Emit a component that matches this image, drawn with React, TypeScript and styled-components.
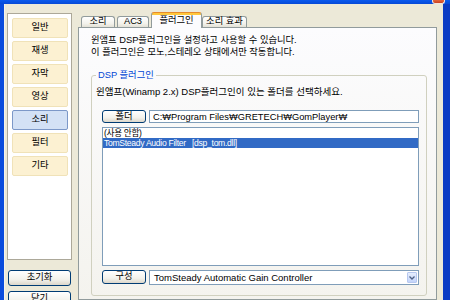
import React from "react";
import styled, { createGlobalStyle } from "styled-components";

const Global = createGlobalStyle`
  html, body { margin: 0; padding: 0; background: #ECE9D8; }
  * { box-sizing: border-box; }
`;

const UI_FONT = `"Liberation Sans", "Noto Sans CJK KR", sans-serif`;

const Window = styled.div`
  width: 450px;
  height: 300px;
  overflow: hidden;
  display: flex;
  flex-direction: column;
  font-family: ${UI_FONT};
  font-size: 9px;
  color: #000;
`;

const TitleBar = styled.div`
  flex: none;
  height: 4px;
  background: linear-gradient(#0A5AEE, #0649D6);
  display: flex;
  justify-content: flex-end;
  align-items: flex-end;
  padding-right: 5px;
`;

const CloseButton = styled.div`
  width: 13px;
  height: 4px;
  background: linear-gradient(#E4643D, #C9421F);
  border: 1px solid #F4E4DC;
  border-top: none;
  border-radius: 0 0 3px 3px;
`;

const Frame = styled.div`
  flex: 1;
  min-height: 0;
  display: flex;
  gap: 6px;
  padding: 8px 6px 0 3px;
  background: #ECE9D8;
  border-left: 4px solid #0A4CDD;
  border-right: 7px solid #0A3BC4;
  box-shadow: inset 1px 0 0 #F5F3EA;
`;

const Sidebar = styled.div`
  width: 65px;
  flex: none;
  display: flex;
  flex-direction: column;
  margin-top: 1px;
`;

const NavPanel = styled.div`
  height: 247px;
  flex: none;
  background: #fff;
  border: 1px solid #ACA899;
  padding: 4px 3px 0 4px;
  display: flex;
  flex-direction: column;
  gap: 3px;
`;

const NavButton = styled.div<{ $active?: boolean }>`
  height: 20px;
  display: flex;
  align-items: center;
  justify-content: center;
  border-radius: 2px;
  border: 1px solid ${(p) => (p.$active ? "#7C98C8" : "#F0E2B8")};
  background: ${(p) => (p.$active ? "#D3E1F5" : "#FCF1D2")};
  font-size: 9.3px;
  line-height: 1;
`;

const SideActions = styled.div`
  margin-top: 10px;
  padding: 0 1px;
  display: flex;
  flex-direction: column;
  gap: 5px;
`;

const XPButton = styled.button<{ $w?: number; $h: number }>`
  flex: none;
  width: ${(p) => (p.$w ? `${p.$w}px` : "auto")};
  height: ${(p) => p.$h}px;
  padding: 0;
  border: 1px solid #003C74;
  border-radius: 3px;
  background: linear-gradient(#FFFFFF, #F3F2EC 60%, #DCD7CB);
  font-family: ${UI_FONT};
  font-size: 9.3px;
  line-height: 1;
  color: #000;
  display: flex;
  align-items: center;
  justify-content: center;
`;

const TabControl = styled.div`
  width: 359px;
  flex: none;
  display: flex;
  flex-direction: column;
`;

const TabStrip = styled.div`
  height: 16px;
  flex: none;
  display: flex;
  align-items: flex-end;
  padding-left: 3px;
  margin-bottom: -1px;
  position: relative;
  z-index: 1;
`;

const Tab = styled.div<{ $w: number; $active?: boolean }>`
  width: ${(p) => p.$w}px;
  height: ${(p) => (p.$active ? 16 : 11)}px;
  margin-right: ${(p) => (p.$active ? 0 : 2)}px;
  margin-bottom: ${(p) => (p.$active ? 0 : 1)}px;
  border: 1px solid #919B9C;
  border-bottom: none;
  border-top-color: ${(p) => (p.$active ? "#E68B2C" : "#919B9C")};
  border-radius: 3px 3px 0 0;
  background: ${(p) =>
    p.$active
      ? "linear-gradient(#FFC83C 0 2px, #FCFCFE 2px)"
      : "linear-gradient(#FFFFFF, #F3F2EC 65%, #E3E1D6)"};
  display: flex;
  align-items: center;
  justify-content: center;
  padding-top: ${(p) => (p.$active ? 1 : 0)}px;
  font-size: 9.3px;
  line-height: 1;
`;

const TabPage = styled.div`
  flex: 1;
  border: 1px solid #919B9C;
  background: linear-gradient(#FCFCFE, #F4F3EE);
  padding: 6px 0 0 12px;
`;

const Description = styled.p`
  margin: 0;
  font-size: 9.3px;
  line-height: 12px;
`;

const GroupBox = styled.fieldset`
  margin: 11px 0 0 0;
  width: 336px;
  border: 1px solid #D0D0BF;
  border-radius: 3px;
  padding: 5px 7px 10px 4px;
  min-width: 0;
`;

const GroupLegend = styled.legend`
  padding: 0 2px;
  color: #0046D5;
  font-size: 9.3px;
  line-height: 12px;
`;

const Instruction = styled.div`
  font-size: 9.5px;
  line-height: 12px;
`;

const Controls = styled.div`
  margin-left: 6px;
  width: 317px;
  display: flex;
  flex-direction: column;
`;

const FieldRow = styled.div<{ $top: number; $h: number }>`
  margin-top: ${(p) => p.$top}px;
  height: ${(p) => p.$h}px;
  display: flex;
  gap: 3px;
`;

const PathField = styled.div`
  flex: 1;
  border: 1px solid #7F9DB9;
  background: #fff;
  padding-left: 3px;
  display: flex;
  align-items: center;
  font-size: 9.3px;
  white-space: pre;
  overflow: hidden;
`;

const ListBox = styled.div`
  margin-top: 4px;
  height: 139px;
  border: 1px solid #7F9DB9;
  background: #fff;
`;

const ListItem = styled.div<{ $selected?: boolean }>`
  height: 10px;
  line-height: 10px;
  padding-left: 1px;
  white-space: pre;
  font-size: 8.6px;
  letter-spacing: -0.3px;
  background: ${(p) => (p.$selected ? "#316AC5" : "transparent")};
  color: ${(p) => (p.$selected ? "#fff" : "#000")};
`;

const ComboBox = styled.div`
  flex: 1;
  border: 1px solid #7F9DB9;
  background: #fff;
  padding: 0 1px 0 4px;
  display: flex;
  align-items: center;
`;

const ComboText = styled.span`
  flex: 1;
  font-size: 9.5px;
  white-space: nowrap;
`;

const DropButton = styled.div`
  width: 10px;
  height: 11px;
  border: 1px solid #B7C8F0;
  border-radius: 1px;
  background: linear-gradient(#E6EEFD, #C3D4FA);
  display: flex;
  align-items: center;
  justify-content: center;
`;

const navItems = ["일반", "재생", "자막", "영상", "소리", "필터", "기타"];
const tabs = [
  { label: "소리", w: 34 },
  { label: "AC3", w: 32 },
  { label: "플러그인", w: 51, active: true },
  { label: "소리 효과", w: 45 },
];

export default function App() {
  return (
    <>
      <Global />
      <Window>
        <TitleBar>
          <CloseButton />
        </TitleBar>
        <Frame>
          <Sidebar>
            <NavPanel>
              {navItems.map((n) => (
                <NavButton key={n} $active={n === "소리"}>
                  {n}
                </NavButton>
              ))}
            </NavPanel>
            <SideActions>
              <XPButton $h={16}>초기화</XPButton>
              <XPButton $h={16}>닫기</XPButton>
            </SideActions>
          </Sidebar>
          <TabControl>
            <TabStrip>
              {tabs.map((t) => (
                <Tab key={t.label} $w={t.w} $active={t.active}>
                  {t.label}
                </Tab>
              ))}
            </TabStrip>
            <TabPage>
              <Description>
                윈앰프 DSP플러그인을 설정하고 사용할 수 있습니다.
                <br />
                이 플러그인은 모노,스테레오 상태에서만 작동합니다.
              </Description>
              <GroupBox>
                <GroupLegend>DSP 플러그인</GroupLegend>
                <Instruction>윈앰프(Winamp 2.x) DSP플러그인이 있는 폴더를 선택하세요.</Instruction>
                <Controls>
                  <FieldRow $top={12} $h={13}>
                    <XPButton $w={44} $h={13}>폴더</XPButton>
                    <PathField>C:₩Program Files₩GRETECH₩GomPlayer₩</PathField>
                  </FieldRow>
                  <ListBox>
                    <ListItem>(사용 안함)</ListItem>
                    <ListItem $selected>TomSteady Audio Filter   [dsp_tom.dll]</ListItem>
                  </ListBox>
                  <FieldRow $top={4} $h={15}>
                    <XPButton $w={44} $h={14}>구성</XPButton>
                    <ComboBox>
                      <ComboText>TomSteady Automatic Gain Controller</ComboText>
                      <DropButton>
                        <svg width="6" height="4" viewBox="0 0 6 4">
                          <path d="M0.5 0.5 L3 3 L5.5 0.5" fill="none" stroke="#4D6185" strokeWidth="1.3" />
                        </svg>
                      </DropButton>
                    </ComboBox>
                  </FieldRow>
                </Controls>
              </GroupBox>
            </TabPage>
          </TabControl>
        </Frame>
      </Window>
    </>
  );
}
